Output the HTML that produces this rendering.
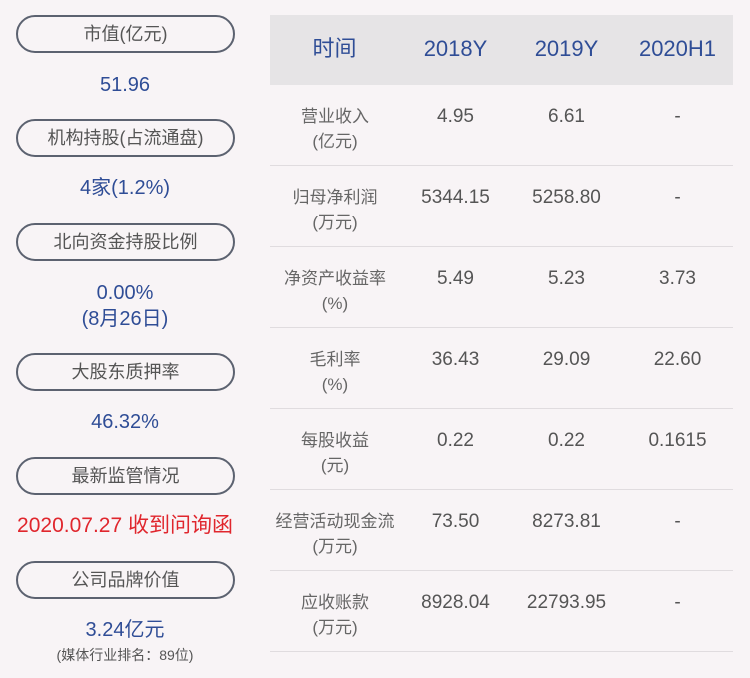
<!DOCTYPE html><html><head><meta charset="utf-8"><style>
body{margin:0;width:750px;height:678px;background:#f8f4f6;font-family:"Liberation Sans","Noto Sans CJK SC",sans-serif;position:relative;overflow:hidden}
.p{position:absolute;left:16px;width:215px;height:34px;border:2px solid #5c6270;border-radius:19px;text-align:center;line-height:34px;font-size:18px;color:#555}
.v{position:absolute;left:0;width:250px;text-align:center;font-size:20px;color:#2f4d96;line-height:24px}
.t{position:absolute;text-align:center;font-size:18px;color:#555;line-height:25px}
.h{position:absolute;top:15px;left:270px;width:463px;height:70px;background:#e6e4e6}
.hl{position:absolute;top:34px;height:30px;line-height:30px;font-size:22px;color:#2f4d96;text-align:center;width:111px}
.ln{position:absolute;left:270px;width:463px;height:1px;background:#e0dcdf}
</style></head><body>
<div class="p" style="top:15px">市值(亿元)</div>
<div class="v" style="top:73px">51.96</div>
<div class="p" style="top:119px">机构持股(占流通盘)</div>
<div class="v" style="top:176px">4家(1.2%)</div>
<div class="p" style="top:223px">北向资金持股比例</div>
<div class="v" style="top:280px;line-height:26px">0.00%<br>(8月26日)</div>
<div class="p" style="top:353px">大股东质押率</div>
<div class="v" style="top:410px">46.32%</div>
<div class="p" style="top:457px">最新监管情况</div>
<div class="v" style="top:514px;color:#e0262d;font-size:21px">2020.07.27 收到问询函</div>
<div class="p" style="top:561px">公司品牌价值</div>
<div class="v" style="top:618px">3.24亿元</div>
<div class="v" style="top:643px;font-size:14px;color:#555">(媒体行业排名：89位)</div>
<div class="h"></div>
<div class="hl" style="left:279px">时间</div>
<div class="hl" style="left:400px">2018Y</div>
<div class="hl" style="left:511px">2019Y</div>
<div class="hl" style="left:622px">2020H1</div>
<div class="ln" style="top:165px"></div><div class="ln" style="top:246px"></div><div class="ln" style="top:327px"></div><div class="ln" style="top:408px"></div><div class="ln" style="top:489px"></div><div class="ln" style="top:570px"></div><div class="ln" style="top:651px"></div>
<div id="rows"></div>
<script>
var d=[["营业收入<br>(亿元)","4.95","6.61","-"],["归母净利润<br>(万元)","5344.15","5258.80","-"],["净资产收益率<br>(%)","5.49","5.23","3.73"],["毛利率<br>(%)","36.43","29.09","22.60"],["每股收益<br>(元)","0.22","0.22","0.1615"],["经营活动现金流<br>(万元)","73.50","8273.81","-"],["应收账款<br>(万元)","8928.04","22793.95","-"]];
var xs=[270,400,511,622],ws=[130,111,111,111],h="";
d.forEach(function(r,i){var y=104+i*81;r.forEach(function(c,j){h+='<div class="t" style="top:'+y+'px;left:'+xs[j]+'px;width:'+ws[j]+'px;'+(j?'font-size:19px;color:#555':'font-size:17px;color:#666')+'">'+c+'</div>';});});
document.getElementById('rows').innerHTML=h;
</script>
</body></html>
